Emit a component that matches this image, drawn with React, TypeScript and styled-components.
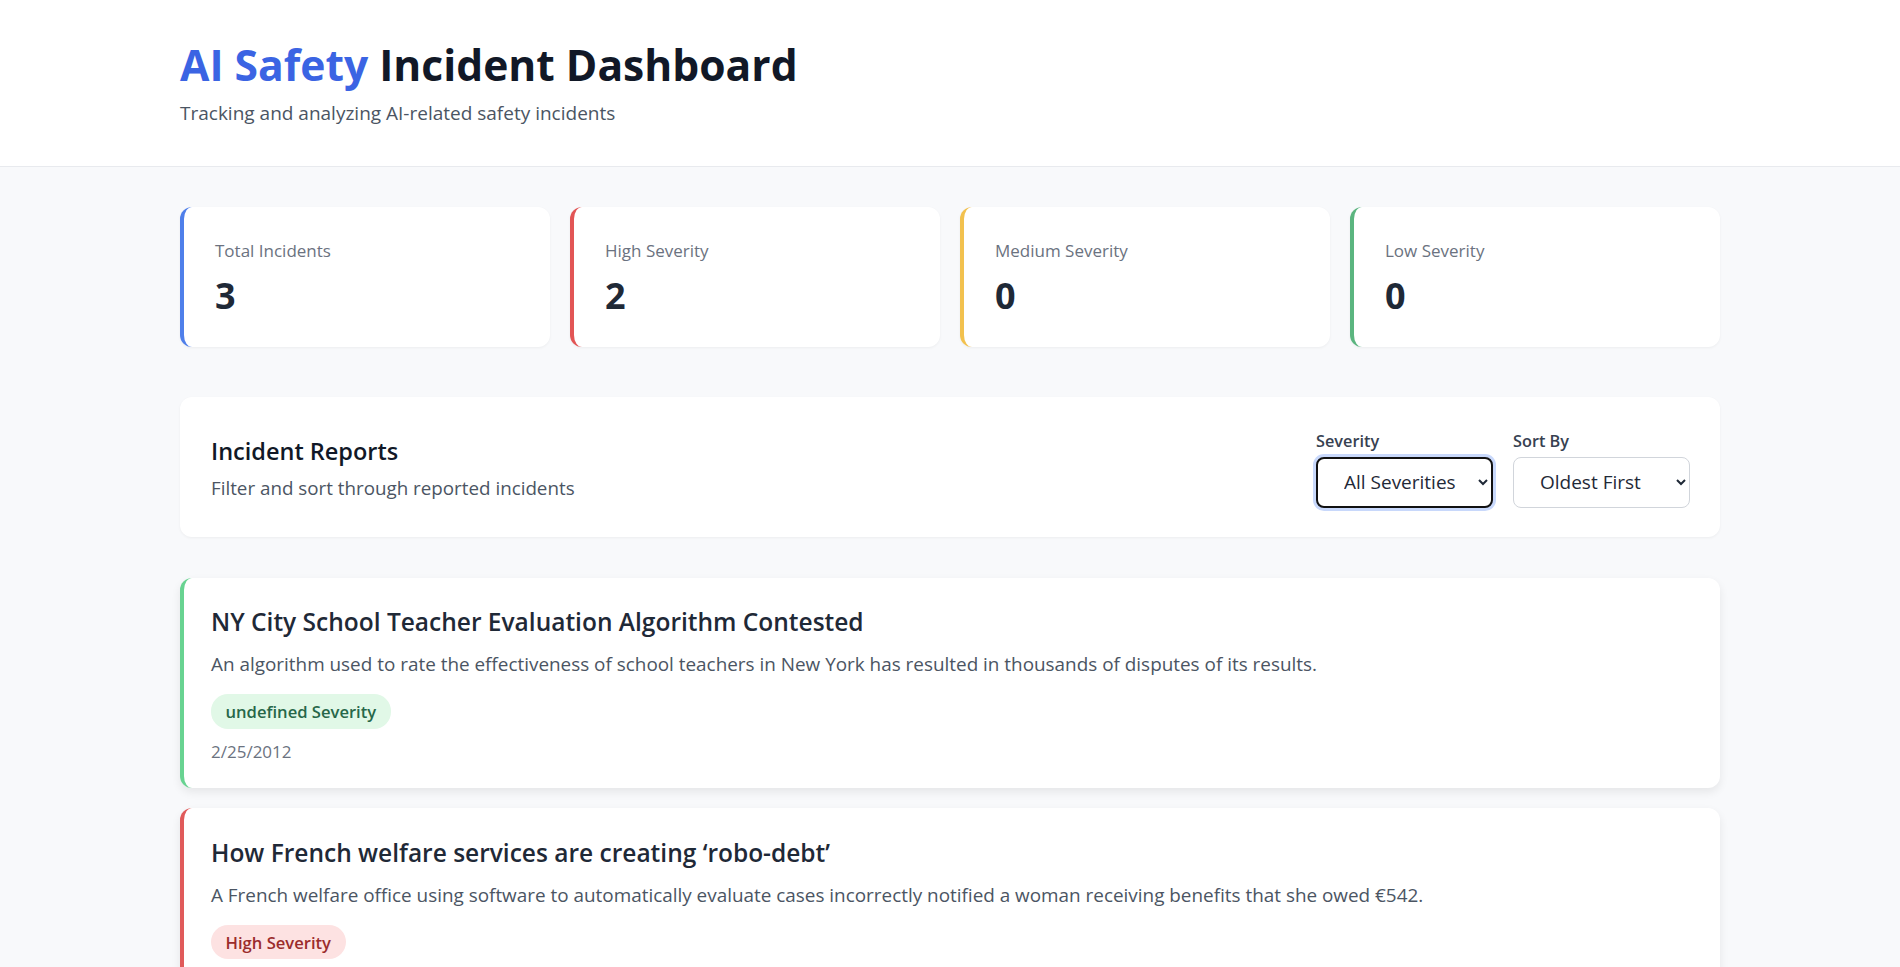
import React from "react";
import styled, { createGlobalStyle } from "styled-components";

const GlobalStyle = createGlobalStyle`
  html, body { margin: 0; padding: 0; }
  body {
    background: #f8f9fb;
    font-family: "Open Sans", "Noto Sans", sans-serif;
    color: #1f2937;
  }
  * { box-sizing: border-box; }
`;

const Header = styled.header`
  background: #ffffff;
  border-bottom: 1px solid #e8eaee;
  padding: 38px 0 39.5px;
`;

const Container = styled.div`
  max-width: 1540px;
  margin: 0 auto;
`;

const Title = styled.h1`
  margin: 0;
  font-size: 42.6px;
  line-height: 52px;
  font-weight: 700;
  color: #111827;
`;

const Accent = styled.span`
  color: #3b64e3;
`;

const Subtitle = styled.p`
  margin: 10px 0 0;
  font-size: 19px;
  line-height: 26px;
  color: #4b5563;
`;

const Main = styled(Container)`
  padding: 40px 0 40px;
`;

const StatsGrid = styled.div`
  display: grid;
  grid-template-columns: repeat(4, 1fr);
  gap: 20px;
  margin-bottom: 50px;
`;

const StatCard = styled.div<{ $accent: string }>`
  background: #ffffff;
  border-radius: 12px;
  border-left: 4px solid ${(p) => p.$accent};
  box-shadow: 0 1px 3px rgba(0, 0, 0, 0.05);
  padding: 32px 30px 26px 31px;
  height: 140px;
`;

const StatLabel = styled.div`
  font-size: 17px;
  line-height: 24px;
  font-weight: 500;
  color: #6b7280;
`;

const StatValue = styled.div`
  margin-top: 11.5px;
  font-size: 36px;
  line-height: 44px;
  font-weight: 700;
  color: #1f2937;
`;

const Panel = styled.section`
  background: #ffffff;
  border-radius: 12px;
  box-shadow: 0 1px 3px rgba(0, 0, 0, 0.05);
  padding: 33px 30px 29px 31px;
  height: 140px;
  display: flex;
  justify-content: space-between;
  align-items: center;
  margin-bottom: 41px;
`;

const PanelHeading = styled.div`
  padding-top: 1px;
`;

const PanelTitle = styled.h2`
  margin: 0;
  font-size: 23.5px;
  line-height: 29px;
  font-weight: 600;
  color: #111827;
`;

const PanelSub = styled.p`
  margin: 9px 0 0;
  font-size: 18.8px;
  line-height: 26px;
  color: #4b5563;
`;

const Filters = styled.div`
  display: flex;
  gap: 20px;
`;

const FilterGroup = styled.label`
  display: flex;
  flex-direction: column;
  gap: 5px;
`;

const FilterLabel = styled.span`
  font-size: 16.3px;
  line-height: 22px;
  font-weight: 600;
  color: #374151;
`;

const Select = styled.select<{ $focused?: boolean }>`
  width: 177px;
  height: 51px;
  padding: 0 8px 0 22px;
  font-family: inherit;
  font-size: 19px;
  color: #1f2937;
  background: #ffffff;
  border-radius: 8px;
  border: ${(p) => (p.$focused ? "2px solid #111111" : "1px solid #d1d5db")};
  box-shadow: ${(p) => (p.$focused ? "0 0 0 3px #c8d8fb" : "none")};
  outline: none;
`;

const List = styled.div`
  display: flex;
  flex-direction: column;
  gap: 20px;
`;

const IncidentCard = styled.article<{ $accent: string }>`
  background: #ffffff;
  border-radius: 12px;
  border-left: 4px solid ${(p) => p.$accent};
  box-shadow: 0 4px 10px rgba(0, 0, 0, 0.08);
  padding: 28.5px 27px 25px 27px;
`;

const IncidentTitle = styled.h3`
  margin: 0;
  font-size: 24.5px;
  line-height: 32px;
  font-weight: 600;
  color: #1f2937;
`;

const IncidentDesc = styled.p`
  margin: 13.4px 0 0;
  font-size: 18.9px;
  line-height: 26px;
  color: #4b5563;
`;

const Badge = styled.span<{ $bg: string; $fg: string }>`
  display: inline-block;
  margin-top: 16.8px;
  height: 34.4px;
  line-height: 36px;
  padding: 0 14.5px;
  border-radius: 17px;
  font-size: 16.6px;
  font-weight: 600;
  background: ${(p) => p.$bg};
  color: ${(p) => p.$fg};
`;

const DateText = styled.div`
  margin-top: 12.8px;
  font-size: 17px;
  line-height: 22px;
  color: #6b7280;
`;

const stats = [
  { label: "Total Incidents", value: 3, accent: "#4f7fea" },
  { label: "High Severity", value: 2, accent: "#e25555" },
  { label: "Medium Severity", value: 0, accent: "#f2c14e" },
  { label: "Low Severity", value: 0, accent: "#5bb57f" },
];

const incidents = [
  {
    title: "NY City School Teacher Evaluation Algorithm Contested",
    desc: "An algorithm used to rate the effectiveness of school teachers in New York has resulted in thousands of disputes of its results.",
    badge: "undefined Severity",
    accent: "#68d391",
    bg: "#e1f8e7",
    fg: "#276749",
    date: "2/25/2012",
  },
  {
    title: "How French welfare services are creating \u2018robo-debt\u2019",
    desc: "A French welfare office using software to automatically evaluate cases incorrectly notified a woman receiving benefits that she owed \u20ac542.",
    badge: "High Severity",
    accent: "#e05a5a",
    bg: "#fde2e2",
    fg: "#9b2c2c",
    date: "9/8/2017",
  },
];

export default function App() {
  return (
    <>
      <GlobalStyle />
      <Header>
        <Container>
          <Title>
            <Accent>AI Safety</Accent> Incident Dashboard
          </Title>
          <Subtitle>Tracking and analyzing AI-related safety incidents</Subtitle>
        </Container>
      </Header>
      <Main>
        <StatsGrid>
          {stats.map((s) => (
            <StatCard key={s.label} $accent={s.accent}>
              <StatLabel>{s.label}</StatLabel>
              <StatValue>{s.value}</StatValue>
            </StatCard>
          ))}
        </StatsGrid>
        <Panel>
          <PanelHeading>
            <PanelTitle>Incident Reports</PanelTitle>
            <PanelSub>Filter and sort through reported incidents</PanelSub>
          </PanelHeading>
          <Filters>
            <FilterGroup>
              <FilterLabel>Severity</FilterLabel>
              <Select $focused defaultValue="all">
                <option value="all">All Severities</option>
                <option value="high">High</option>
                <option value="medium">Medium</option>
                <option value="low">Low</option>
              </Select>
            </FilterGroup>
            <FilterGroup>
              <FilterLabel>Sort By</FilterLabel>
              <Select defaultValue="oldest">
                <option value="newest">Newest First</option>
                <option value="oldest">Oldest First</option>
              </Select>
            </FilterGroup>
          </Filters>
        </Panel>
        <List>
          {incidents.map((i) => (
            <IncidentCard key={i.title} $accent={i.accent}>
              <IncidentTitle>{i.title}</IncidentTitle>
              <IncidentDesc>{i.desc}</IncidentDesc>
              <Badge $bg={i.bg} $fg={i.fg}>
                {i.badge}
              </Badge>
              <DateText>{i.date}</DateText>
            </IncidentCard>
          ))}
        </List>
      </Main>
    </>
  );
}
